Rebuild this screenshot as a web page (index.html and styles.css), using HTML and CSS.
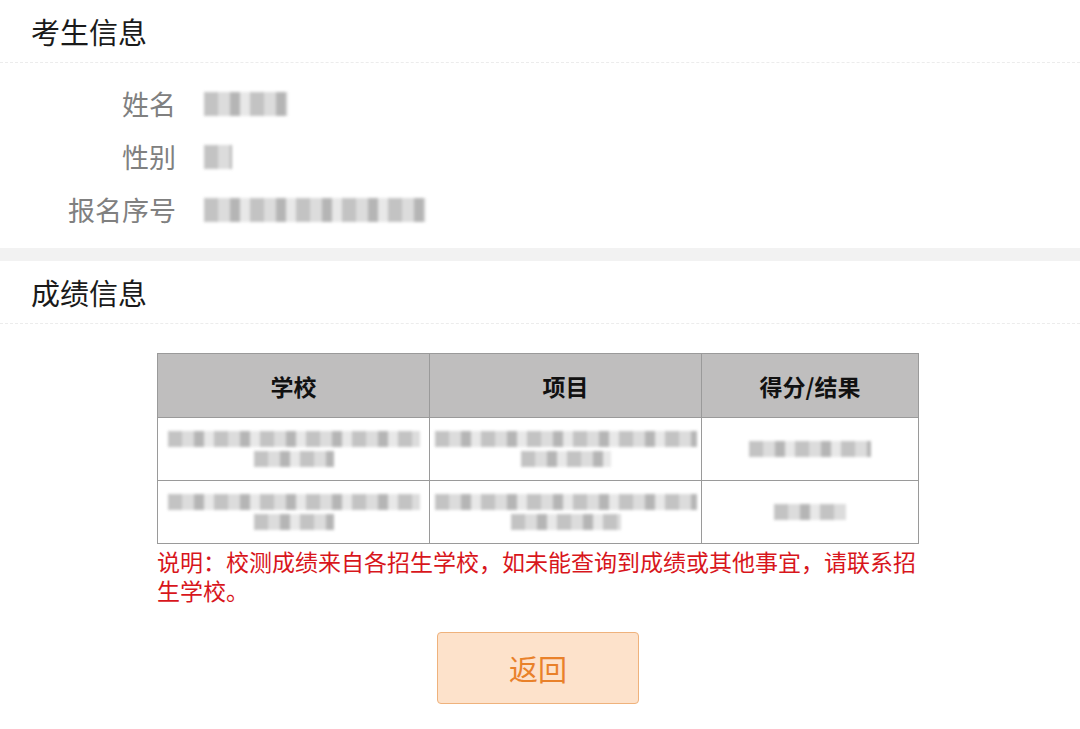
FILE: index.html
```html
<!DOCTYPE html>
<html lang="zh-CN">
<head>
    <meta charset="UTF-8">
    <meta name="viewport" content="width=device-width, initial-scale=1.0">
    <title>成绩查询</title>
    <link rel="stylesheet" href="styles.css">
</head>
<body>
    <div class="panel">
        <div class="panel-title">考生信息</div>
        <div class="info">
            <div class="info-row">
                <div class="info-label">姓名</div>
                <div class="info-value"><span class="mask" style="width:84px"></span></div>
            </div>
            <div class="info-row">
                <div class="info-label">性别</div>
                <div class="info-value"><span class="mask" style="width:28px"></span></div>
            </div>
            <div class="info-row">
                <div class="info-label">报名序号</div>
                <div class="info-value"><span class="mask" style="width:222px"></span></div>
            </div>
        </div>
    </div>

    <div class="band"></div>

    <div class="panel">
        <div class="panel-title">成绩信息</div>
        <div class="score-box">
            <table class="score-table">
                <colgroup>
                    <col class="col-school">
                    <col class="col-item">
                    <col class="col-result">
                </colgroup>
                <thead>
                    <tr>
                        <th>学校</th>
                        <th>项目</th>
                        <th>得分/结果</th>
                    </tr>
                </thead>
                <tbody>
                    <tr>
                        <td>
                            <span class="mask line" style="width:252px"></span>
                            <span class="mask line" style="width:80px"></span>
                        </td>
                        <td>
                            <span class="mask line" style="width:262px"></span>
                            <span class="mask line" style="width:90px"></span>
                        </td>
                        <td><span class="mask line" style="width:122px"></span></td>
                    </tr>
                    <tr>
                        <td>
                            <span class="mask line" style="width:252px"></span>
                            <span class="mask line" style="width:80px"></span>
                        </td>
                        <td>
                            <span class="mask line" style="width:262px"></span>
                            <span class="mask line" style="width:110px"></span>
                        </td>
                        <td><span class="mask line" style="width:72px"></span></td>
                    </tr>
                </tbody>
            </table>
            <p class="note">说明：校测成绩来自各招生学校，如未能查询到成绩或其他事宜，请联系招生学校。</p>
            <div class="actions">
                <button class="back-btn">返回</button>
            </div>
        </div>
    </div>
</body>
</html>
```

FILE: styles.css
```css
body {
    font-family: "Noto Sans CJK SC", "Liberation Sans", sans-serif;
    background: white;
    margin: 0;
    padding: 0;
    color: #222;
}

.panel {
    background: white;
}

.panel-title {
    height: 62px;
    line-height: 62px;
    padding-left: 31px;
    font-size: 29px;
    color: #1a1a1a;
    border-bottom: 1px dashed #ececec;
}

.info {
    padding: 14px 0 12px;
}

.info-row {
    display: flex;
    align-items: center;
    height: 53px;
}

.info-label {
    width: 176px;
    text-align: right;
    font-size: 27px;
    color: #808080;
}

.info-value {
    margin-left: 28px;
    display: flex;
    align-items: center;
}

/* 打码的内容 */
.mask {
    display: inline-block;
    height: 24px;
    background: repeating-linear-gradient(90deg, #b9b9b9 0 14px, #d6d6d6 14px 26px, #a9a9a9 26px 36px, #e4e4e4 36px 46px);
    filter: blur(1.5px);
    opacity: 0.85;
}

.band {
    height: 13px;
    background: #f2f2f2;
}

.score-box {
    width: 762px;
    margin: 29px 0 0 157px;
    padding-bottom: 25px;
}

.score-table {
    width: 100%;
    border-collapse: collapse;
    table-layout: fixed;
}

.col-school,
.col-item {
    width: 272px;
}

.score-table th,
.score-table td {
    border: 1px solid #9a9a9a;
    text-align: center;
    padding: 0 4px;
}

.score-table th {
    height: 63px;
    background: #bfbebe;
    font-size: 23px;
    font-weight: bold;
    color: #111;
}

.score-table td {
    height: 62px;
    vertical-align: middle;
}

.score-table .line {
    display: block;
    height: 16px;
    margin: 4px auto;
}

.note {
    margin: 3px 0 0;
    font-size: 23px;
    line-height: 29px;
    color: #d8161c;
}

.actions {
    margin-top: 27px;
    text-align: center;
}

.back-btn {
    width: 202px;
    height: 72px;
    background: #fde2cb;
    border: 1px solid #efb27c;
    border-radius: 4px;
    font-family: inherit;
    font-size: 29px;
    color: #e9812a;
    cursor: pointer;
}
```
